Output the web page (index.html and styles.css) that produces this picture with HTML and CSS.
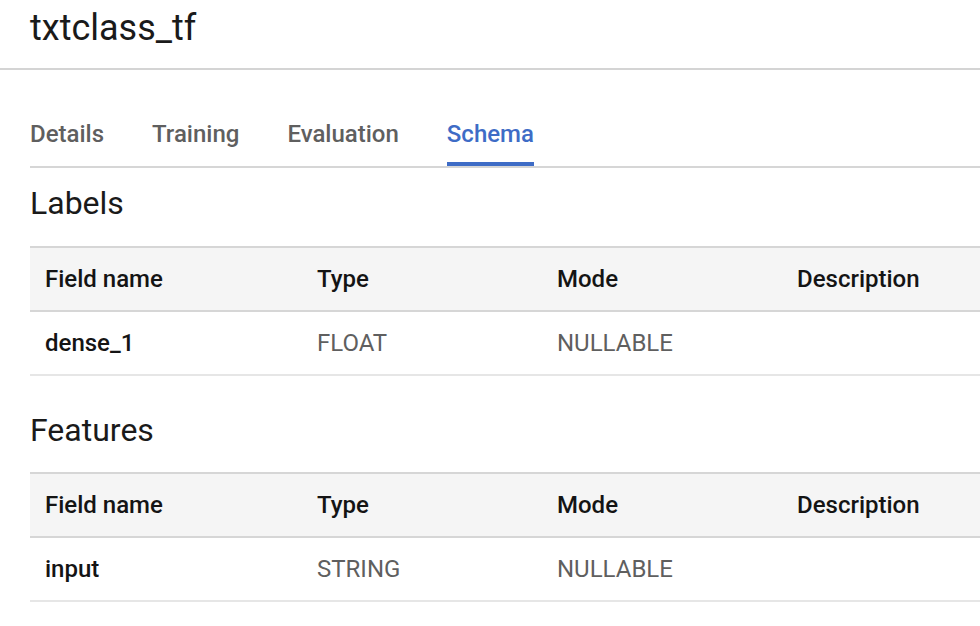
FILE: index.html
```html
<!DOCTYPE html>
<html lang="en">
<head>
<meta charset="utf-8">
<title>txtclass_tf</title>
<link rel="stylesheet" href="styles.css">
</head>
<body>
<header class="page-header">
  <h1 class="page-title">txtclass_tf</h1>
</header>
<nav class="tabs">
  <a class="tab">Details</a>
  <a class="tab">Training</a>
  <a class="tab">Evaluation</a>
  <a class="tab active">Schema</a>
</nav>
<section class="section">
  <h2 class="section-title">Labels</h2>
  <div class="schema-table">
    <div class="row head">
      <div class="cell">Field name</div>
      <div class="cell">Type</div>
      <div class="cell">Mode</div>
      <div class="cell">Description</div>
    </div>
    <div class="row">
      <div class="cell name">dense_1</div>
      <div class="cell value">FLOAT</div>
      <div class="cell value">NULLABLE</div>
      <div class="cell value"></div>
    </div>
  </div>
</section>
<section class="section">
  <h2 class="section-title features">Features</h2>
  <div class="schema-table">
    <div class="row head">
      <div class="cell">Field name</div>
      <div class="cell">Type</div>
      <div class="cell">Mode</div>
      <div class="cell">Description</div>
    </div>
    <div class="row">
      <div class="cell name">input</div>
      <div class="cell value">STRING</div>
      <div class="cell value">NULLABLE</div>
      <div class="cell value"></div>
    </div>
  </div>
</section>
</body>
</html>
```
FILE: styles.css
```css
html, body {
  margin: 0;
  padding: 0;
  background: #ffffff;
}
body {
  font-family: Roboto, "Liberation Sans", Arial, sans-serif;
  color: #212121;
  overflow: hidden;
}
.page-header {
  box-sizing: border-box;
  height: 70px;
  border-bottom: 2px solid #d4d4d4;
}
.page-title {
  margin: 0;
  padding: 10px 0 0 30px;
  font-size: 36px;
  line-height: 36px;
  font-weight: 400;
  color: #1a1a1a;
}
.tabs {
  display: flex;
  gap: 48px;
  margin-left: 30px;
  border-bottom: 2px solid #d6d6d6;
}
.tab {
  padding-top: 52px;
  padding-bottom: 16px;
  font-size: 24px;
  line-height: 24px;
  font-weight: 500;
  color: #5f5f5f;
  border-bottom: 4px solid transparent;
}
.tab.active {
  color: #3e6cc6;
  border-bottom-color: #3e6cc6;
}
.section-title {
  margin: 19px 0 27px 30px;
  font-size: 32px;
  line-height: 32px;
  font-weight: 400;
  color: #1a1a1a;
}
.section-title.features {
  margin-top: 38px;
  margin-bottom: 26px;
}
.schema-table {
  margin-left: 30px;
  border-top: 2px solid #d6d6d6;
}
.row {
  display: grid;
  grid-template-columns: 272px 240px 240px 1fr;
  align-items: center;
  height: 62px;
  border-bottom: 2px solid #e6e6e6;
}
.row.head {
  background: #f5f5f5;
  border-bottom-color: #d6d6d6;
}
.cell {
  padding-left: 15px;
  font-size: 24px;
  line-height: 28px;
  white-space: nowrap;
}
.row.head .cell {
  font-weight: 500;
  color: #141414;
}
.cell.name {
  font-weight: 500;
  color: #141414;
}
.cell.value {
  color: #5f5f5f;
}
```
